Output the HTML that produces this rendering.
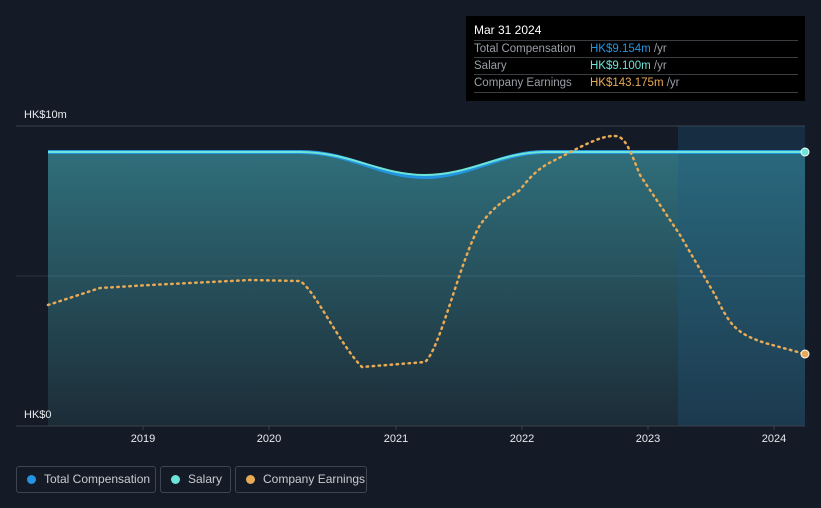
<!DOCTYPE html>
<html><head><style>
html,body{margin:0;width:821px;height:508px;overflow:hidden}
body{background:#151b26;font-family:"Liberation Sans",sans-serif;position:relative}
.tip{position:absolute;left:466px;top:16px;width:339px;height:85px;background:#000;color:#ddd;font-size:11.5px}
.tip .t{position:absolute;left:8px;top:7px;color:#fff;font-size:12px}
.row{position:absolute;left:8px;width:324px;height:17px;border-top:1px solid #3a3d42;line-height:17px;color:#9a9ea6}
.row span{position:absolute;left:116px}
.leg{position:absolute;top:466px;height:27px;border:1px solid #3e4450;border-radius:3px;color:#c8cbd0;font-size:12px;line-height:25px;box-sizing:border-box;white-space:nowrap;padding-left:27px}
.leg i{position:absolute;left:10px;top:8px;width:9px;height:9px;border-radius:50%}
</style></head><body>
<svg width="821" height="508" style="position:absolute;left:0;top:0">
<defs>
<linearGradient id="g" x1="0" y1="0" x2="0" y2="1"><stop offset="0" stop-color="#2f6f7b"/><stop offset="1" stop-color="#1c2c37"/></linearGradient>
</defs>
<line x1="16" y1="126" x2="805" y2="126" stroke="#3a404a"/>
<path d="M48,152 L300,152 C350,152 380,177 425,177 C470,177 500,152 545,152 L805,152 L805,426 L48,426Z" fill="url(#g)"/>
<rect x="678" y="126" width="127" height="300" fill="#1f5a86" opacity=".3"/>
<line x1="16" y1="276" x2="805" y2="276" stroke="#ffffff" stroke-opacity=".1"/>
<line x1="16" y1="426" x2="805" y2="426" stroke="#3a404a"/>
<path d="M48,152 L300,152 C350,152 380,177 425,177 C470,177 500,152 545,152 L805,152" fill="none" stroke="#2394df" stroke-width="4"/>
<path d="M48,152 L300,152 C350,152 380,175 425,175 C470,175 500,152 545,152 L805,152" fill="none" stroke="#6ee4d8" stroke-width="2"/>
<path d="M48,305 L100,288 L150,285 L250,280 L300,281 C315,290 340,345 362,367 L425,362 C440,350 460,260 480,225 C495,205 505,200 520,190 C535,170 545,165 555,160 C575,150 600,135 615,136 C625,136 630,150 640,175 L680,235 L715,295 C730,325 735,333 765,343 L805,354" fill="none" stroke="#e9aa55" stroke-width="2.5" stroke-dasharray="1.5 4.5" stroke-linecap="round"/>
<circle cx="805" cy="152" r="4" fill="#6ee4d8" stroke="#fff" stroke-width="1"/>
<circle cx="805" cy="354" r="4" fill="#e9aa55" stroke="#fff" stroke-width="1"/>
<g fill="#e8eaee" font-size="11" font-family="Liberation Sans" text-anchor="middle">
<text x="143" y="442">2019</text><text x="269" y="442">2020</text><text x="396" y="442">2021</text><text x="522" y="442">2022</text><text x="648" y="442">2023</text><text x="774" y="442">2024</text>
</g>
<g stroke="#3a404a"><line x1="143" y1="426" x2="143" y2="430"/><line x1="269" y1="426" x2="269" y2="430"/><line x1="396" y1="426" x2="396" y2="430"/><line x1="522" y1="426" x2="522" y2="430"/><line x1="648" y1="426" x2="648" y2="430"/><line x1="774" y1="426" x2="774" y2="430"/></g>
<text x="24" y="118" fill="#e8eaee" font-size="11" font-family="Liberation Sans">HK$10m</text>
<text x="24" y="418" fill="#e8eaee" font-size="11" font-family="Liberation Sans">HK$0</text>
</svg>
<div class="tip"><div class="t">Mar 31 2024</div>
<div class="row" style="top:24px">Total Compensation<span><b style="font-weight:normal;color:#2394df">HK$9.154m</b> /yr</span></div>
<div class="row" style="top:41px">Salary<span><b style="font-weight:normal;color:#6ee4d8">HK$9.100m</b> /yr</span></div>
<div class="row" style="top:58px;border-bottom:1px solid #3a3d42">Company Earnings<span><b style="font-weight:normal;color:#e9aa55">HK$143.175m</b> /yr</span></div>
</div>
<div class="leg" style="left:16px;width:140px"><i style="background:#2394df"></i>Total Compensation</div>
<div class="leg" style="left:160px;width:71px"><i style="background:#6ee4d8"></i>Salary</div>
<div class="leg" style="left:235px;width:132px"><i style="background:#e9aa55"></i>Company Earnings</div>
</body></html>
